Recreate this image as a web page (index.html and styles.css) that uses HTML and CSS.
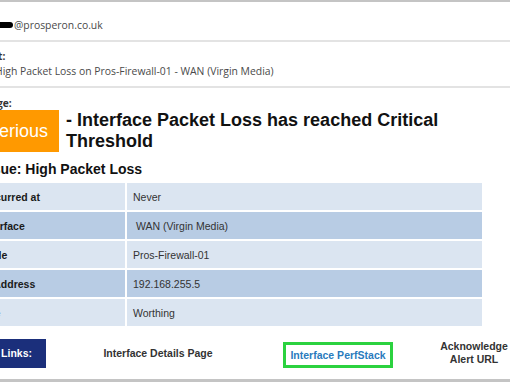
FILE: index.html
```html
<!DOCTYPE html>
<html>
<head>
  <title>Alert: High Packet Loss</title>
  <link rel="stylesheet" href="styles.css">
</head>
<body>
  <div class="email">
    <div class="meta-row sender">
      <span class="redacted"></span>@prosperon.co.uk
    </div>

    <div class="meta-row subject">
      <div class="meta-label">Subject:</div>
      <div class="meta-value">High Packet Loss on Pros-Firewall-01 - WAN (Virgin Media)</div>
    </div>

    <div class="message">
      <div class="meta-label">Message:</div>

      <div class="message-body">
        <div class="alert-title">
          <span class="severity">Serious</span>
          <h1>- Interface Packet Loss has reached Critical Threshold</h1>
        </div>

        <h2 class="issue">Issue: High Packet Loss</h2>

        <table class="details">
          <tr class="row-light">
            <th>Occurred at</th>
            <td>Never</td>
          </tr>
          <tr class="row-dark">
            <th>Interface</th>
            <td>&nbsp;WAN (Virgin Media)</td>
          </tr>
          <tr class="row-light">
            <th>Node</th>
            <td>Pros-Firewall-01</td>
          </tr>
          <tr class="row-dark">
            <th>IP Address</th>
            <td>192.168.255.5</td>
          </tr>
          <tr class="row-light">
            <th>Site</th>
            <td>Worthing</td>
          </tr>
        </table>

        <div class="links">
          <div class="links-label">Quick Links:</div>
          <div class="link-cell wide">Interface Details Page</div>
          <div class="link-cell mid">
            <a class="perfstack" href="#">Interface PerfStack</a>
          </div>
          <div class="link-cell narrow">Acknowledge Alert URL</div>
        </div>
      </div>
    </div>

    <div class="bottom-rule"></div>
  </div>
</body>
</html>
```

FILE: styles.css
```css
:root {
  --rule-color: #c4c4c4;
  --separator: #e3e3e3;
  --meta-text: #4a4a4a;
  --heading: #111;
  --row-light: #dbe5f1;
  --row-dark: #b8cce4;
  --severity: #ff9900;
  --navy: #1b2f7b;
  --link-blue: #2a7bbd;
  --highlight: #2bd23f;
}

* {
  margin: 0;
  padding: 0;
  box-sizing: border-box;
}

body {
  width: 510px;
  height: 382px;
  overflow: hidden;
  background-color: #fff;
  font-family: "Liberation Sans", Arial, sans-serif;
  color: #222;
}

.email {
  display: flex;
  flex-direction: column;
  height: 382px;
  border-top: 2px solid var(--rule-color);
}

/* header rows */
.meta-row {
  font-family: "Open Sans", sans-serif;
  font-size: 10.4px;
  color: var(--meta-text);
  border-bottom: 2px solid var(--separator);
}

.sender {
  height: 40px;
  padding-top: 16px;
  line-height: 14px;
}

.redacted {
  display: inline-block;
  width: 34px;
  height: 6px;
  margin-left: -21px;
  margin-right: 1px;
  border-radius: 3px;
  background-color: #000;
  vertical-align: 1px;
}

.subject {
  height: 46px;
  padding-top: 7px;
  line-height: 15px;
}

.meta-label {
  font-family: "Open Sans", sans-serif;
  font-size: 10.2px;
  font-weight: 700;
  color: #333;
  margin-left: -35px;
}

.meta-value {
  margin-left: -5px;
}

/* message */
.message {
  padding-top: 8px;
}

.message > .meta-label {
  line-height: 14px;
}

.message-body {
  margin-left: -19px;
}

.alert-title {
  display: flex;
  align-items: flex-start;
}

.severity {
  flex: none;
  width: 78px;
  height: 42px;
  line-height: 42px;
  padding-left: 6px;
  font-size: 18px;
  color: #fff;
  background-color: var(--severity);
}

.alert-title h1 {
  max-width: 420px;
  margin-left: 7px;
  font-size: 18px;
  font-weight: 700;
  line-height: 21px;
  color: var(--heading);
}

.issue {
  margin: 8px 0 3px;
  font-size: 14px;
  font-weight: 700;
  line-height: 18px;
  color: var(--heading);
}

/* details table */
.details {
  width: 511px;
  margin-left: -8px;
  border-spacing: 2px;
  font-size: 10.5px;
}

.details th,
.details td {
  height: 27px;
  padding: 0 6px;
  text-align: left;
  vertical-align: middle;
}

.details th {
  width: 150px;
  font-weight: 700;
  color: #1a1a1a;
}

.details td {
  color: #333;
}

.row-light th,
.row-light td {
  background-color: var(--row-light);
}

.row-dark th,
.row-dark td {
  background-color: var(--row-dark);
}

/* links row */
.links {
  display: flex;
  align-items: center;
  height: 29px;
  margin-top: 11px;
  margin-left: -26px;
  font-size: 10.5px;
  font-weight: 700;
}

.links-label {
  flex: none;
  height: 29px;
  line-height: 29px;
  padding: 0 14px;
  color: #fff;
  background-color: var(--navy);
}

.link-cell {
  flex: none;
  text-align: center;
  color: #333;
  line-height: 13px;
}

.link-cell.wide {
  width: 224px;
}

.link-cell.mid {
  width: 136px;
  padding-top: 2px;
}

.link-cell.narrow {
  width: 136px;
  padding: 0 24px;
  margin-top: -2px;
}

.perfstack {
  display: inline-block;
  height: 26px;
  line-height: 20px;
  padding: 0 4px;
  border: 3px solid var(--highlight);
  color: var(--link-blue);
  text-decoration: none;
}

.bottom-rule {
  flex: none;
  margin-top: auto;
  height: 3px;
  background-color: var(--rule-color);
}
```
